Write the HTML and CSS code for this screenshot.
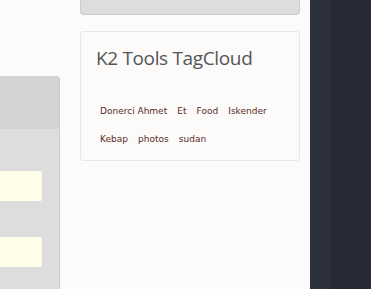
FILE: index.html
```html
<!DOCTYPE html>
<html lang="en">
<head>
    <meta charset="UTF-8">
    <title>K2 Tools TagCloud</title>
    <link rel="stylesheet" href="styles.css">
</head>
<body>
    <div class="page">
        <div class="leftcol">
            <div class="panel-head"></div>
            <div class="panel-body">
                <div class="field"></div>
                <div class="field second"></div>
            </div>
        </div>
        <div class="maincol">
            <div class="topbox"></div>
            <div class="card">
                <h3 class="card-title">K2 Tools TagCloud</h3>
                <div class="tags">
                    <a href="#">Donerci Ahmet</a>
                    <a href="#">Et</a>
                    <a href="#">Food</a>
                    <a href="#">Iskender</a>
                    <a href="#">Kebap</a>
                    <a href="#">photos</a>
                    <a href="#">sudan</a>
                </div>
            </div>
        </div>
        <div class="sidebar">
            <div class="sidebar-a"></div>
            <div class="sidebar-b"></div>
        </div>
    </div>
</body>
</html>
```

FILE: styles.css
```css
body {
    margin: 0;
    background: #fcfbf9;
    font-family: "DejaVu Sans", sans-serif;
}
.page {
    display: flex;
    height: 289px;
    overflow: hidden;
}
.leftcol {
    width: 59px;
    margin-top: 76px;
    border-right: 1px solid #c9c9c9;
    border-top-right-radius: 4px;
    background: #dddddd;
    overflow: hidden;
}
.panel-head {
    height: 53px;
    background: #d3d3d3;
}
.panel-body {
    padding-top: 42px;
}
.field {
    width: 42px;
    height: 30px;
    background: #fffeea;
    border-radius: 0 2px 2px 0;
}
.field.second {
    margin-top: 36px;
}
.maincol {
    width: 220px;
    margin-left: 20px;
}
.topbox {
    height: 15px;
    background: #dddddd;
    border: 1px solid #cccccc;
    border-top: none;
    border-radius: 0 0 4px 4px;
    box-sizing: border-box;
}
.card {
    margin-top: 16px;
    height: 130px;
    box-sizing: border-box;
    border: 1px solid #e8e7e5;
    border-radius: 3px;
    padding: 14px 15px;
}
.card-title {
    margin: 0;
    font-family: "Open Sans", sans-serif;
    font-weight: normal;
    font-size: 19px;
    letter-spacing: -0.35px;
    color: #555555;
    line-height: 24px;
}
.tags {
    margin-top: 26px;
    padding-left: 4px;
    line-height: 26px;
}
.tags a {
    font-family: "DejaVu Sans", sans-serif;
    font-size: 9px;
    color: #5a2a2a;
    text-decoration: none;
    margin-right: 5px;
}
.sidebar {
    display: flex;
    margin-left: 10px;
    flex: 1;
}
.sidebar-a {
    width: 20px;
    background: #2d313b;
}
.sidebar-b {
    flex: 1;
    background: #262a34;
}
```
